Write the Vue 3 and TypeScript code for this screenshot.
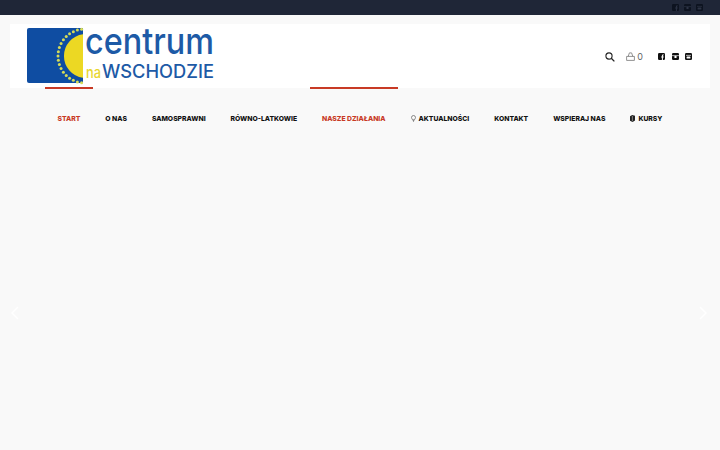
<template>
  <div class="page">
    <div class="top-bar">
      <div class="social top-social">
        <svg v-for="s in socials" :key="s" class="social-icon" viewBox="0 0 7 7">
          <rect width="7" height="7" rx="1.2" fill="currentColor" />
          <path v-if="s === 'fb'" d="M4.9 7V4.4h.8l.1-1h-.9v-.6c0-.3.1-.5.5-.5h.4V1.4h-.7c-.8 0-1.2.5-1.2 1.2v.8h-.7v1h.7V7z" :fill="'var(--cut)'" />
          <template v-else-if="s === 'ig'">
            <path d="M0 2.4h7v.7H0z" :fill="'var(--cut)'" />
            <circle cx="3.5" cy="3.9" r="1.2" :fill="'var(--cut)'" />
          </template>
          <template v-else>
            <path d="M1 1.9h5v.7H1z" :fill="'var(--cut)'" />
            <rect x="1.6" y="3.4" width="3.8" height="2.2" rx=".5" :fill="'var(--cut)'" />
          </template>
        </svg>
      </div>
    </div>

    <header class="header">
      <svg class="logo" viewBox="0 0 188 56" width="188" height="56">
        <path d="M2 0h54v55H2a2 2 0 0 1-2-2V2a2 2 0 0 1 2-2z" fill="#0f4da2" />
        <path d="M56 6.2A22 22 0 0 0 56 49.8z" fill="#ecd823" />
        <circle v-for="(d, i) in dots" :key="i" :cx="d.x" :cy="d.y" r="1.5" fill="#d6dc58" />
        <text class="logo-big" x="58" y="25.5" textLength="129" lengthAdjust="spacingAndGlyphs">centrum</text>
        <text class="logo-na" x="59" y="50" textLength="15" lengthAdjust="spacingAndGlyphs">na</text>
        <text class="logo-small" x="75" y="50" textLength="112" lengthAdjust="spacingAndGlyphs">WSCHODZIE</text>
      </svg>

      <div class="tools">
        <svg class="search" viewBox="0 0 11 11" width="10" height="10">
          <circle cx="4.4" cy="4.4" r="3.4" fill="none" stroke="#222" stroke-width="1.2" />
          <path d="M6.9 6.9l3.4 3.4" stroke="#222" stroke-width="1.5" />
        </svg>
        <div class="cart">
          <svg viewBox="0 0 9 9" width="9" height="9">
            <path d="M.6 4.4h7.8v4H.6zM2.2 4.4L3.4.9h2.2l1.2 3.5" fill="none" stroke="#777" stroke-width=".8" />
          </svg>
          <span>0</span>
        </div>
        <div class="social head-social">
          <svg v-for="s in socials" :key="s" class="social-icon" viewBox="0 0 7 7">
            <rect width="7" height="7" rx="1.2" fill="currentColor" />
            <path v-if="s === 'fb'" d="M4.9 7V4.4h.8l.1-1h-.9v-.6c0-.3.1-.5.5-.5h.4V1.4h-.7c-.8 0-1.2.5-1.2 1.2v.8h-.7v1h.7V7z" :fill="'var(--cut)'" />
            <template v-else-if="s === 'ig'">
              <path d="M0 2.4h7v.7H0z" :fill="'var(--cut)'" />
              <circle cx="3.5" cy="3.9" r="1.2" :fill="'var(--cut)'" />
            </template>
            <template v-else>
              <path d="M1 1.9h5v.7H1z" :fill="'var(--cut)'" />
              <rect x="1.6" y="3.4" width="3.8" height="2.2" rx=".5" :fill="'var(--cut)'" />
            </template>
          </svg>
        </div>
      </div>
    </header>

    <nav class="nav">
      <a v-for="item in menu" :key="item.label" :class="['nav-item', { active: item.active }]">
        <svg v-if="item.icon === 'bulb'" class="nav-icon" viewBox="0 0 6 8" width="5" height="7">
          <path d="M1.9 5.6C1.6 4.6.6 4.2.6 2.8a2.4 2.4 0 0 1 4.8 0c0 1.4-1 1.8-1.3 2.8zM2.1 6.5h1.8M2.5 7.5h1" fill="none" stroke="#555" stroke-width=".8" />
        </svg>
        <svg v-if="item.icon === 'book'" class="nav-icon" viewBox="0 0 5 7" width="5" height="7">
          <path d="M0 1.2L2.2 0 5 .8v4.7L2.6 7 0 5.8z" fill="#222" />
          <path d="M2.4 1v5.2" stroke="#ddd" stroke-width=".5" />
        </svg>
        {{ item.label }}
      </a>
    </nav>

    <svg class="arrow arrow-left" viewBox="0 0 8 14" width="8" height="14">
      <path d="M7 1L1 7l6 6" fill="none" stroke="#fff" stroke-width="1.5" />
    </svg>
    <svg class="arrow arrow-right" viewBox="0 0 8 14" width="8" height="14">
      <path d="M1 1l6 6-6 6" fill="none" stroke="#fff" stroke-width="1.5" />
    </svg>
  </div>
</template>

<script setup lang="ts">
interface MenuItem {
  label: string;
  active?: boolean;
  icon?: 'bulb' | 'book';
}

const socials = ['fb', 'ig', 'yt']

const menu: MenuItem[] = [
  { label: 'START', active: true },
  { label: 'O NAS' },
  { label: 'SAMOSPRAWNI' },
  { label: 'RÓWNO-LATKOWIE' },
  { label: 'NASZE DZIAŁANIA', active: true },
  { label: 'AKTUALNOŚCI', icon: 'bulb' },
  { label: 'KONTAKT' },
  { label: 'WSPIERAJ NAS' },
  { label: 'KURSY', icon: 'book' }
]

// ring of little stars round the yellow half circle
const dots = Array.from({ length: 19 }, (_, i) => {
  const angle = Math.PI * (0.54 + (0.92 * i) / 18)
  return { x: 58 + 27 * Math.cos(angle), y: 28 - 27 * Math.sin(angle) }
})
</script>

<style scoped>
.page {
  position: relative;
  height: 450px;
  overflow: hidden;
  background: #f9f9f9;
  font-family: Inter, "Liberation Sans", sans-serif;
}

.top-bar {
  display: flex;
  justify-content: flex-end;
  align-items: center;
  height: 15px;
  padding-right: 17px;
  background: #1f2637;
}

.social {
  display: flex;
}

.social-icon {
  display: block;
  width: 7px;
  height: 7px;
}

.top-social {
  gap: 5px;
  margin-top: -1px;
  color: #0d1320;
  --cut: #2d3445;
}

.head-social {
  gap: 6.5px;
  margin-left: 15px;
  color: #111;
  --cut: #fff;
}

.header {
  display: flex;
  justify-content: space-between;
  align-items: center;
  height: 64px;
  margin: 9px 10px 0;
  padding: 0 18px 0 17px;
  background: #fff;
}

.logo {
  display: block;
  margin-top: -1px;
  overflow: visible;
}

.logo-big {
  font-size: 37px;
  font-weight: 500;
  fill: #1d5aa6;
}

.logo-na {
  font-size: 15px;
  font-weight: 500;
  fill: #e8d62e;
}

.logo-small {
  font-size: 18px;
  font-weight: 500;
  fill: #1d5aa6;
}

.tools {
  display: flex;
  align-items: center;
  margin-top: 1px;
}

.search {
  display: block;
  margin-right: 11px;
}

.cart {
  display: flex;
  align-items: center;
  gap: 2px;
  font-size: 9px;
  color: #666;
}

.cart svg {
  display: block;
}

.nav {
  display: flex;
  justify-content: center;
  margin-top: -1px;
}

.nav-item {
  display: flex;
  align-items: center;
  gap: 3px;
  height: 61px;
  padding: 0 12.5px;
  border-top: 2px solid transparent;
  font-size: 6.8px;
  font-weight: 800;
  letter-spacing: 0;
  white-space: nowrap;
  color: #111;
  box-sizing: border-box;
}

.nav-item.active {
  border-top-color: #c83a25;
  color: #c83a25;
}

.nav-icon {
  display: block;
}

.arrow {
  position: absolute;
  top: 306px;
}

.arrow-left {
  left: 11px;
}

.arrow-right {
  right: 13px;
}
</style>
